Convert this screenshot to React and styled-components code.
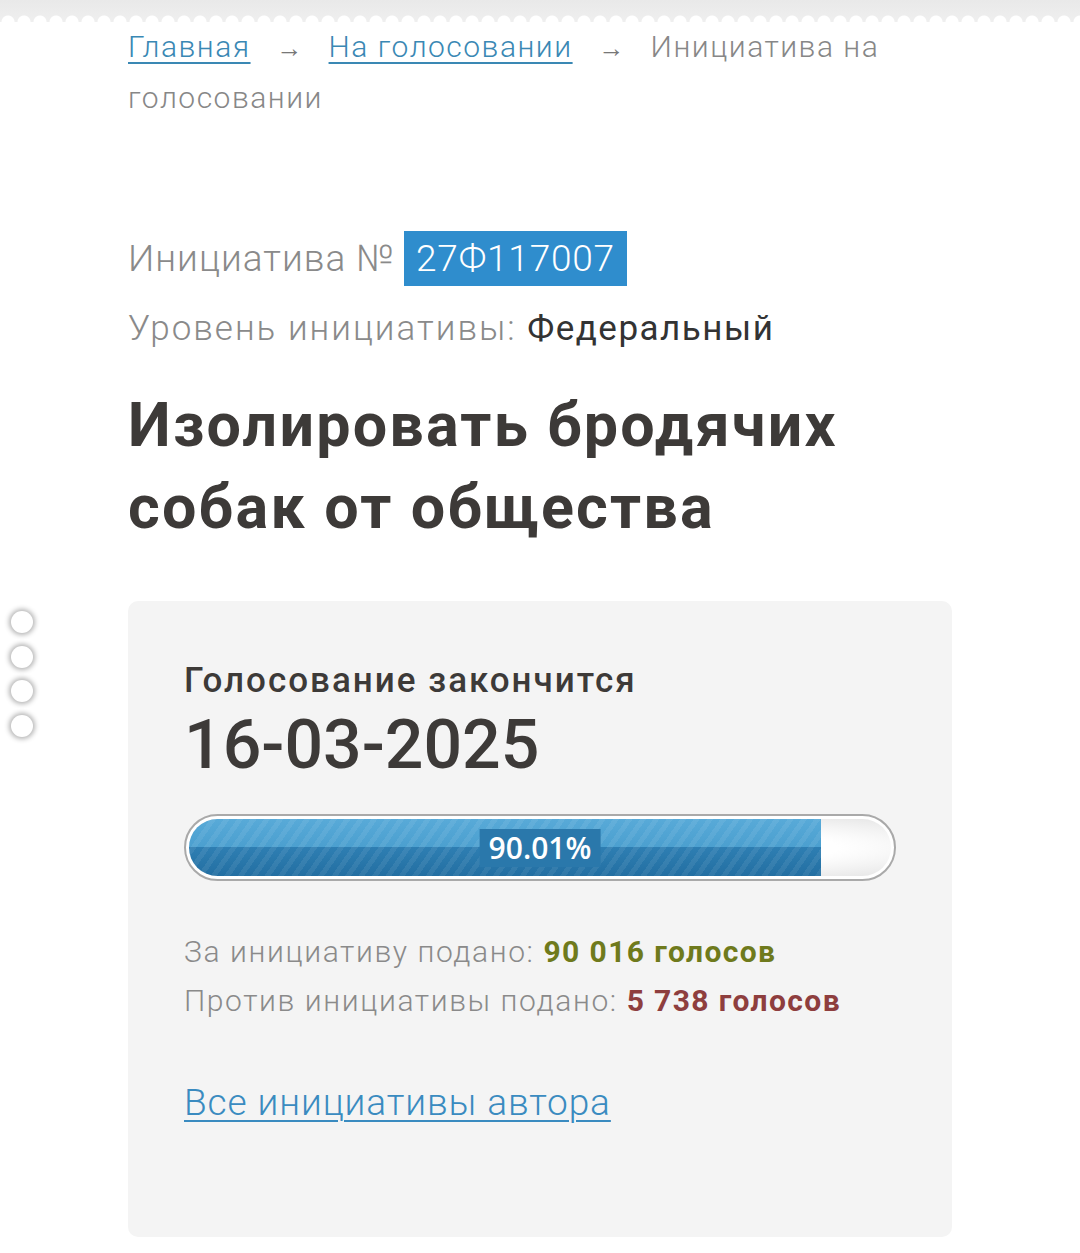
import React from "react";
import styled, { createGlobalStyle } from "styled-components";

const GlobalStyle = createGlobalStyle`
  body {
    margin: 0;
    background: #fff;
    font-family: Roboto, "Noto Sans", sans-serif;
    color: #3d3a38;
  }
`;

const TopBand = styled.div`
  height: 22px;
  background:
    radial-gradient(circle at 8px 22px, #fff 6px, transparent 7px) 0 0 / 16px 22px repeat-x,
    linear-gradient(#e9e9e9, #efefef);
`;

const Page = styled.main`
  width: 824px;
  margin: 0 auto;
`;

const Crumbs = styled.nav`
  font-size: 30px;
  font-weight: 300;
  line-height: 50px;
  letter-spacing: 1.5px;
  color: #878787;
`;

const CrumbLink = styled.a`
  color: #3a88b4;
  text-decoration: underline;
  text-underline-offset: 5px;
  text-decoration-thickness: 2px;
`;

const Arrow = styled.span`
  display: inline-block;
  margin: 0 26px;
  font-size: 26px;
  letter-spacing: 0;
  color: #777;
`;

const NumberRow = styled.div`
  margin-top: 108px;
  font-size: 37px;
  font-weight: 300;
  line-height: 55px;
  letter-spacing: 1px;
  color: #8a8a8a;
`;

const Badge = styled.span`
  display: inline-block;
  margin-left: 9px;
  padding: 0 12px;
  background: #2f8dcd;
  color: #fff;
  letter-spacing: 0.8px;
`;

const LevelRow = styled.div`
  margin-top: 18px;
  font-size: 35px;
  font-weight: 300;
  line-height: 50px;
  letter-spacing: 2px;
  color: #8a8a8a;
`;

const LevelValue = styled.span`
  color: #333;
  font-weight: 400;
  letter-spacing: 1.5px;
`;

const Title = styled.h1`
  margin: 30px 0 0;
  font-size: 61px;
  font-weight: 700;
  line-height: 82px;
  letter-spacing: 2.2px;
  color: #3d3a38;
`;

const Card = styled.section`
  margin-top: 53px;
  padding: 58px 56px 109px;
  background: #f4f4f4;
  border-radius: 10px;
`;

const EndsLabel = styled.div`
  font-size: 35px;
  font-weight: 500;
  line-height: 44px;
  letter-spacing: 2px;
  color: #3d3a38;
`;

const EndDate = styled.div`
  margin-top: 4px;
  font-size: 68px;
  font-weight: 500;
  line-height: 76px;
  color: #3d3a38;
`;

const Bar = styled.div`
  position: relative;
  margin-top: 31px;
  height: 67px;
  border: 2px solid #a9a9a9;
  border-radius: 34px;
  background: #fff;
  padding: 3px;
  box-sizing: border-box;
`;

const Track = styled.div`
  height: 100%;
  border-radius: 30px;
  overflow: hidden;
  background: radial-gradient(ellipse at 50% 50%, #fff 60%, #e6e6e6 100%);
  display: flex;
`;

const Fill = styled.div`
  height: 100%;
  background:
    repeating-linear-gradient(
      -55deg,
      rgba(255, 255, 255, 0.07) 0 5px,
      rgba(255, 255, 255, 0) 5px 11px
    ),
    linear-gradient(#58aad8 0%, #4b9fcf 50%, #2e7eb2 50%, #236fa2 100%);
`;

const Percent = styled.span`
  position: absolute;
  left: 50%;
  top: 50%;
  transform: translate(-50%, -50%);
  padding: 0 9px;
  background: #2a78ab;
  color: #fff;
  font-family: "Open Sans", sans-serif;
  font-weight: 600;
  font-size: 30px;
  line-height: 38px;
`;

const Stats = styled.div`
  margin-top: 46px;
  font-size: 30px;
  font-weight: 300;
  line-height: 49px;
  letter-spacing: 1.6px;
  color: #8a8a8a;
`;

const Count = styled.span`
  font-weight: 700;
  letter-spacing: 1.4px;
  color: ${(p) => p.$tone};
`;

const AuthorLink = styled.a`
  display: inline-block;
  margin-top: 53px;
  font-size: 37px;
  font-weight: 300;
  line-height: 50px;
  letter-spacing: 0.9px;
  color: #3a8bc0;
  text-decoration: underline;
  text-underline-offset: 5px;
  text-decoration-thickness: 2px;
`;

const SideDots = styled.div`
  position: fixed;
  left: 11px;
  top: 611px;
  display: flex;
  flex-direction: column;
  gap: 12.5px;
`;

const Dot = styled.span`
  width: 22px;
  height: 22px;
  border-radius: 50%;
  background: #fff;
  box-shadow: 0 0 5px 2px rgba(0, 0, 0, 0.3);
`;

export default function App() {
  const pct = 90.01;

  return (
    <>
      <GlobalStyle />
      <TopBand />
      <SideDots>
        {[0, 1, 2, 3].map((i) => (
          <Dot key={i} />
        ))}
      </SideDots>
      <Page>
        <Crumbs>
          <CrumbLink href="#">Главная</CrumbLink>
          <Arrow>→</Arrow>
          <CrumbLink href="#">На голосовании</CrumbLink>
          <Arrow>→</Arrow>
          Инициатива на голосовании
        </Crumbs>

        <NumberRow>
          Инициатива №<Badge>27Ф117007</Badge>
        </NumberRow>
        <LevelRow>
          Уровень инициативы: <LevelValue>Федеральный</LevelValue>
        </LevelRow>

        <Title>
          Изолировать бродячих
          <br />
          собак от общества
        </Title>

        <Card>
          <EndsLabel>Голосование закончится</EndsLabel>
          <EndDate>16-03-2025</EndDate>

          <Bar>
            <Track>
              <Fill style={{ width: `${pct}%` }} />
            </Track>
            <Percent>{pct}%</Percent>
          </Bar>

          <Stats>
            <div>
              За инициативу подано: <Count $tone="#6f7a1c">90 016 голосов</Count>
            </div>
            <div>
              Против инициативы подано: <Count $tone="#8e3e3e">5 738 голосов</Count>
            </div>
          </Stats>

          <AuthorLink href="#">Все инициативы автора</AuthorLink>
        </Card>
      </Page>
    </>
  );
}
